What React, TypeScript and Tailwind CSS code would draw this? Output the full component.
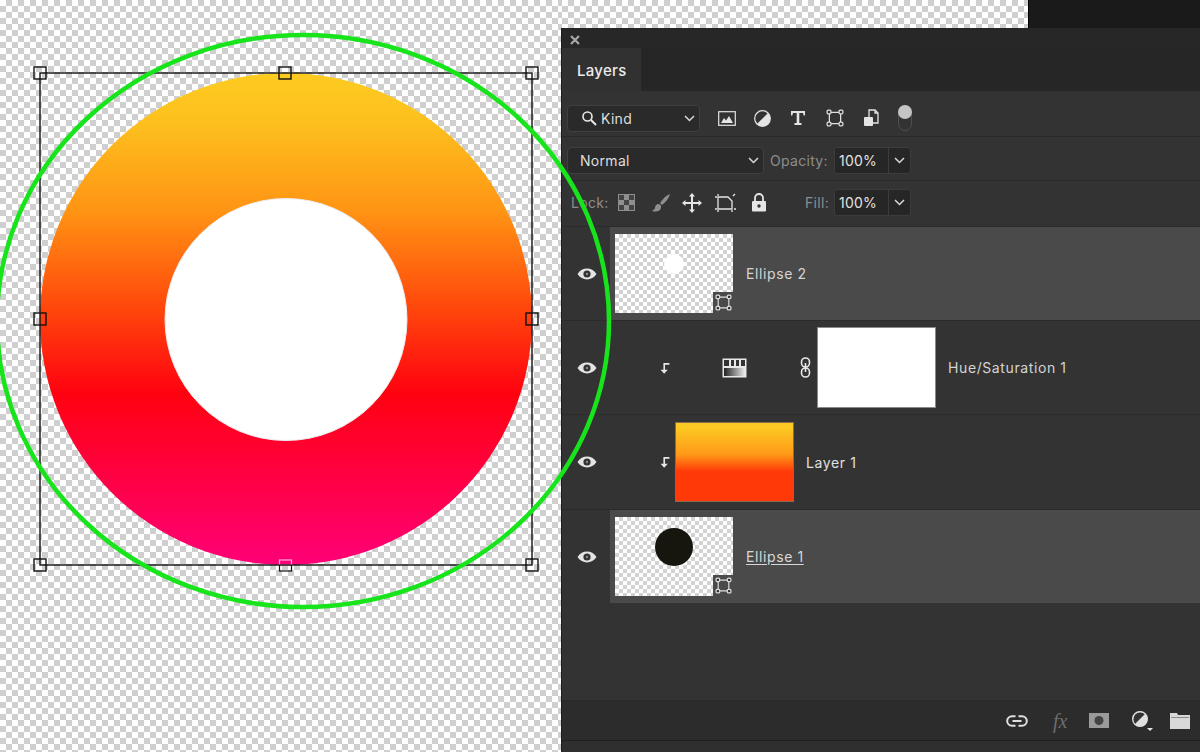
import type { ReactNode } from "react";

const checker =
  "bg-[repeating-conic-gradient(#cfcfcf_0_25%,#ffffff_0_50%)] bg-[length:12px_12px]";
const font = "font-['Inter','Liberation_Sans',sans-serif]";

function Chevron({ className = "" }: { className?: string }) {
  return (
    <svg width="11" height="7" viewBox="0 0 11 7" className={className} fill="none" stroke="#d8d8d8" strokeWidth="1.5">
      <path d="M1 1l4.5 4.5L10 1" />
    </svg>
  );
}

function Eye() {
  return (
    <svg width="20" height="12" viewBox="0 0 20 12">
      <path d="M0.5 6C3 2.2 6.2 0.6 10 0.6S17 2.2 19.5 6C17 9.8 13.8 11.4 10 11.4S3 9.8 0.5 6z" fill="#e4e4e4" />
      <circle cx="10" cy="6" r="3.6" fill="#333" />
      <circle cx="10" cy="6" r="1.2" fill="#888" />
    </svg>
  );
}

function ShapeBadge({ size = 17, color = "#e0e0e0" }: { size?: number; color?: string }) {
  return (
    <svg width={size} height={size} viewBox="0 0 16 16" fill="none" stroke={color} strokeWidth="1.1">
      <path d="M3 3h10M3 13h10M3 3v10M13 3v10" />
      <rect x="1" y="1" width="3.4" height="3.4" rx="1" fill="#333" />
      <rect x="11.6" y="1" width="3.4" height="3.4" rx="1" fill="#333" />
      <rect x="1" y="11.6" width="3.4" height="3.4" rx="1" fill="#333" />
      <rect x="11.6" y="11.6" width="3.4" height="3.4" rx="1" fill="#333" />
    </svg>
  );
}

function ClipArrow() {
  return (
    <svg width="11" height="12" viewBox="0 0 10 11" fill="#e6e6e6">
      <path d="M4 1h5.5v1.5H5.500V7H8L4.700 10.800 1.400 7H4z" />
    </svg>
  );
}

function Thumb({ children }: { children: ReactNode }) {
  return (
    <div className="relative flex h-[79px] w-[118px] shrink-0 items-center justify-center bg-[repeating-conic-gradient(#d2d2d2_0_25%,#ffffff_0_50%)] bg-[length:8px_8px] pb-[20px]">
      {children}
      <div className="absolute bottom-0 right-0 flex h-[21px] w-[20px] items-center justify-center bg-[#4a4a4a]">
        <ShapeBadge />
      </div>
    </div>
  );
}

function EyeCell() {
  return <div className="flex w-[48px] shrink-0 items-center justify-center pl-[1px]"><Eye /></div>;
}

function ValueBox({ value }: { value: string }) {
  return (
    <div className="flex h-[27px] w-[77px] items-center rounded-[3px] border border-[#3c3c3c] bg-[#262626]">
      <span className="w-[53px] pl-[4px] text-[14px] tracking-[0.2px] text-[#e2e2e2]">{value}</span>
      <span className="flex h-full flex-1 items-center justify-center border-l border-[#3c3c3c]"><Chevron /></span>
    </div>
  );
}

export default function App() {
  return (
    <div className={`relative flex h-[752px] w-[1200px] overflow-hidden bg-[#1a1a1a] ${font}`}>
      <div className={`h-full w-[561px] shrink-0 ${checker}`} />

      <div className="flex h-full w-[639px] flex-col">
        <div className="flex h-[28px] shrink-0">
          <div className={`h-full w-[467px] ${checker} bg-[position:1px_0]`} />
          <div className="flex-1 border-l border-black bg-[#1a1a1a]" />
        </div>

        <div className="flex flex-1 flex-col rounded-tl-[3px] border-l border-[#1d1d1d] bg-[#333333]">
          <div className="flex h-[20px] shrink-0 items-center bg-[#272727] pl-[8px] pt-[4px]">
            <svg width="10" height="10" viewBox="0 0 10 10" stroke="#a8a8a8" strokeWidth="2.200">
              <path d="M1 1l8 8M9 1l-8 8" />
            </svg>
          </div>

          <div className="flex h-[43px] shrink-0 bg-[#262626]">
            <div className="flex w-[79px] items-center bg-[#313131] pl-[15px] pt-[3px] text-[15px] font-medium tracking-[0.3px] text-[#ececec]">
              Layers
            </div>
          </div>

          <div className="flex h-[46px] shrink-0 items-center border-b border-[#2a2a2a] pl-[5px] pt-[9px]">
            <div className="flex h-[27px] w-[133px] items-center rounded-[4px] border border-[#404040] bg-[#2a2a2a] pl-[13px] pr-[4px] text-[#dedede]">
              <svg width="16" height="16" viewBox="0 0 16 16" fill="none" stroke="#e8e8e8" strokeWidth="1.6">
                <circle cx="6.500" cy="6.500" r="4.500" />
                <path d="M10 10l5 5" strokeWidth="2" />
              </svg>
              <span className="ml-[4px] flex-1 text-[14px] tracking-[0.3px]">Kind</span>
              <Chevron />
            </div>
            <div className="ml-[18px] flex items-center">
              <svg width="18" height="15" viewBox="0 0 18 15">
                <rect x="0.700" y="0.700" width="16.600" height="13.600" fill="none" stroke="#e4e4e4" strokeWidth="1.200" />
                <path d="M3 12l3-5 2 2.500 3-4.500 4 7z" fill="#e4e4e4" />
              </svg>
              <svg width="17" height="17" viewBox="0 0 17 17" className="ml-[18px]">
                <circle cx="8.500" cy="8.500" r="7.800" fill="#e4e4e4" />
                <path d="M2.900 14A7.800 7.800 0 0 1 14 2.900z" fill="#333" />
                <circle cx="8.500" cy="8.500" r="7.800" fill="none" stroke="#e4e4e4" strokeWidth="1.200" />
              </svg>
              <svg width="16" height="16" viewBox="0 0 16 16" fill="#e4e4e4" className="ml-[19px]">
                <path d="M1 1h14v4.500h-1.300L13 3H9.300v10H11.500v2h-7v-2H6.700V3H3L2.300 5.500H1z" />
              </svg>
              <div className="ml-[20px] flex"><ShapeBadge size={18} /></div>
              <svg width="16" height="18" viewBox="0 0 16 18" className="ml-[19px]">
                <path d="M6 1h6l3 3v10H6z" fill="none" stroke="#e4e4e4" strokeWidth="1.300" />
                <path d="M12 1v3h3" fill="none" stroke="#e4e4e4" strokeWidth="1.300" />
                <rect x="1" y="8" width="9" height="9" rx="1" fill="#e4e4e4" />
              </svg>
              <div className="relative ml-[19px] h-[26px] w-[14px] rounded-full border border-[#505050]">
                <div className="absolute -left-px -top-px h-[14px] w-[14px] rounded-full bg-[#c4c4c4]" />
              </div>
            </div>
          </div>

          <div className="flex h-[44px] shrink-0 items-center border-b border-[#2a2a2a] pl-[5px] pt-[3px]">
            <div className="flex h-[27px] w-[197px] items-center rounded-[4px] border border-[#404040] bg-[#2a2a2a] pl-[12px] pr-[4px]">
              <span className="flex-1 text-[14px] tracking-[0.3px] text-[#dedede]">Normal</span>
              <Chevron />
            </div>
            <span className="ml-[6px] w-[64px] text-[14px] tracking-[0.3px] text-[#8d8d8d]">Opacity:</span>
            <ValueBox value="100%" />
          </div>

          <div className="flex h-[45px] shrink-0 items-center pb-[2px] pl-[9px]">
            <span className="w-[47px] text-[14px] tracking-[0.3px] text-[#8d8d8d]">Lock:</span>
            <svg width="17" height="17" viewBox="0 0 17 17">
              <rect width="17" height="17" fill="#8f8f8f" />
              <path d="M1 1h5v5H1zM11 1h5v5h-5zM6 6h5v5H6zM1 11h5v5H1zM11 11h5v5h-5z" fill="#444" />
            </svg>
            <svg width="20" height="20" viewBox="0 0 20 20" className="ml-[16px]" fill="#8f8f8f">
              <path d="M19 1c-3 1-7 4-10 9l2 2c4-3 7-7 8-11z" />
              <path d="M8 11c-3 0-4 2-4 4 0 1-2 2-3 3 3 1 9 1 9-4 0-1 0-2-2-3z" />
            </svg>
            <svg width="20" height="20" viewBox="0 0 20 20" className="ml-[11px]" fill="#e6e6e6">
              <path d="M10 0l3 3.500h-2V9h5.500V7l3.500 3-3.500 3v-2H11v5.500h2L10 20l-3-3.500h2V11H3.500v2L0 10l3.500-3v2H9V3.500H7z" />
            </svg>
            <svg width="22" height="20" viewBox="0 0 22 20" className="ml-[12px]" fill="none" stroke="#e6e6e6" strokeWidth="1.300">
              <path d="M4 4h10l4 4v8H4z" />
              <path d="M1 4h2M4 1v2M19 3l2-2M1 16h2M4 17v2M18 17v2M20 16h2" />
            </svg>
            <svg width="16" height="19" viewBox="0 0 16 19" className="ml-[15px]">
              <path d="M4 8V5a4 4 0 0 1 8 0v3" fill="none" stroke="#e6e6e6" strokeWidth="1.800" />
              <rect x="1" y="8" width="14" height="10.500" rx="1" fill="#e6e6e6" />
              <circle cx="8" cy="13" r="1.700" fill="#333" />
            </svg>
            <span className="ml-[38px] w-[29px] text-[14px] tracking-[0.3px] text-[#8d8d8d]">Fill:</span>
            <ValueBox value="100%" />
          </div>

          <div className="flex h-[95px] shrink-0 border-y border-[#2b2b2b]">
            <EyeCell />
            <div className="flex flex-1 items-center bg-[#4a4a4a] pl-[5px]">
              <Thumb><div className="h-[20px] w-[20px] rounded-full bg-white" /></Thumb>
              <span className="ml-[13px] text-[14px] tracking-[0.6px] text-[#d4d4d4]">Ellipse 2</span>
            </div>
          </div>

          <div className="flex h-[94px] shrink-0 items-center border-b border-[#2b2b2b]">
            <EyeCell />
            <div className="ml-[49px] flex"><ClipArrow /></div>
            <svg width="25" height="20" viewBox="0 0 25 20" className="ml-[52px]">
              <defs>
                <linearGradient id="adj" x1="0" x2="1" y1="0" y2="0">
                  <stop offset="0" stopColor="#222" />
                  <stop offset="1" stopColor="#eee" />
                </linearGradient>
              </defs>
              <rect x="0.500" y="0.500" width="24" height="19" fill="#e8e8e8" />
              <rect x="2" y="2" width="21" height="6" fill="#333" />
              <path d="M7 2h2v6H7zM12 2h2v6h-2zM17 2h2v6h-2z" fill="#e8e8e8" />
              <rect x="2" y="10" width="21" height="8" fill="url(#adj)" />
            </svg>
            <svg width="11" height="21" viewBox="0 0 11 21" className="ml-[53px]" fill="none" stroke="#e8e8e8" strokeWidth="1.600">
              <rect x="1.500" y="1" width="8" height="9" rx="4" />
              <rect x="1.500" y="11" width="8" height="9" rx="4" />
              <path d="M5.500 6v9" />
            </svg>
            <div className="ml-[6px] h-[81px] w-[119px] shrink-0 border border-[#8a8a8a] bg-white" />
            <span className="ml-[12px] text-[14px] tracking-[0.6px] text-[#d4d4d4]">Hue/Saturation 1</span>
          </div>

          <div className="flex h-[95px] shrink-0 items-center border-b border-[#2b2b2b]">
            <EyeCell />
            <div className="ml-[49px] flex"><ClipArrow /></div>
            <div className="ml-[5px] h-[80px] w-[119px] shrink-0 border border-[#8a6a50] bg-[linear-gradient(#fcc922_5%,#ff9a18_40%,#ff3a08_62%,#ff3a08)]" />
            <span className="ml-[12px] text-[14px] tracking-[0.6px] text-[#e0e0e0]">Layer 1</span>
          </div>

          <div className="flex h-[93px] shrink-0 items-stretch">
            <EyeCell />
            <div className="flex flex-1 items-center bg-[#4a4a4a] pl-[5px]">
              <Thumb><div className="h-[38px] w-[38px] rounded-full bg-[#16160f]" /></Thumb>
              <span className="ml-[13px] text-[14px] tracking-[0.6px] text-[#d8d8d8] underline underline-offset-2">Ellipse 1</span>
            </div>
          </div>

          <div className="flex-1" />

          <div className="flex h-[40px] shrink-0 items-center justify-end border-t border-[#2a2a2a] bg-[#2c2c2c] pr-[10px]">
            <svg width="22" height="12" viewBox="0 0 22 12" fill="none" stroke="#e0e0e0" strokeWidth="2">
              <path d="M9.500 1.200H6a4.800 4.800 0 0 0 0 9.600h3.500" />
              <path d="M12.500 1.200H16a4.800 4.800 0 0 1 0 9.600h-3.500" />
              <path d="M6.500 6h9" />
            </svg>
            <span className="ml-[25px] w-[20px] font-['Liberation_Serif',serif] text-[20px] italic leading-none text-[#6d6d6d]">fx</span>
            <svg width="20" height="15" viewBox="0 0 20 15" className="ml-[16px]">
              <rect width="20" height="15" fill="#9a9a9a" />
              <circle cx="10" cy="7.500" r="4.500" fill="#444" />
            </svg>
            <svg width="22" height="20" viewBox="0 0 22 20" className="ml-[22px]">
              <circle cx="9" cy="8" r="7.400" fill="#e0e0e0" />
              <path d="M3.800 13.200A7.400 7.400 0 0 1 14.200 2.800z" fill="#333" />
              <circle cx="9" cy="8" r="7.400" fill="none" stroke="#e0e0e0" strokeWidth="1.200" />
              <path d="M16 17h6l-3 3z" fill="#e8e8e8" />
            </svg>
            <svg width="20" height="16" viewBox="0 0 20 16" className="ml-[17px]">
              <path d="M0 0h7l1 2h12v14H0z" fill="#d8d8d8" />
              <rect x="1.200" y="4" width="17.600" height="1" fill="#888" />
            </svg>
          </div>
          <div className="h-[12px] shrink-0 border-t border-[#1f1f1f] bg-[#2f2f2f]" />
        </div>
      </div>

      <svg width="1200" height="752" viewBox="0 0 1200 752" className="pointer-events-none absolute left-0 top-0">
        <defs>
          <linearGradient id="ring" x1="0" x2="0" y1="0" y2="1">
            <stop offset="0" stopColor="#fdcb20" />
            <stop offset="0.1" stopColor="#fdc01e" />
            <stop offset="0.28" stopColor="#ff9414" />
            <stop offset="0.47" stopColor="#ff4a0c" />
            <stop offset="0.65" stopColor="#ff0210" />
            <stop offset="1" stopColor="#ff0078" />
          </linearGradient>
        </defs>
        <circle cx="286" cy="319" r="246" fill="url(#ring)" />
        <circle cx="286" cy="319.500" r="121" fill="#ffffff" stroke="#ececec" />
        <rect x="40" y="73" width="492" height="492" fill="none" stroke="#111" strokeWidth="1.400" />
        {[
          [40, 73], [285, 73], [532, 73],
          [40, 319], [532, 319],
          [40, 565], [532, 565],
        ].map(([x, y]) => (
          <rect key={`${x}-${y}`} x={x - 6} y={y - 6} width="12" height="12" fill="none" stroke="#111" strokeWidth="1.400" />
        ))}
        <rect x="279.500" y="560" width="12" height="5" fill="none" stroke="#ffb0d0" strokeWidth="1.200" />
        <rect x="279.500" y="565" width="12" height="6" fill="none" stroke="#111" strokeWidth="1.200" />
        <ellipse cx="303" cy="321" rx="306" ry="286" fill="none" stroke="#18e41c" strokeWidth="4.500" />
      </svg>
    </div>
  );
}
